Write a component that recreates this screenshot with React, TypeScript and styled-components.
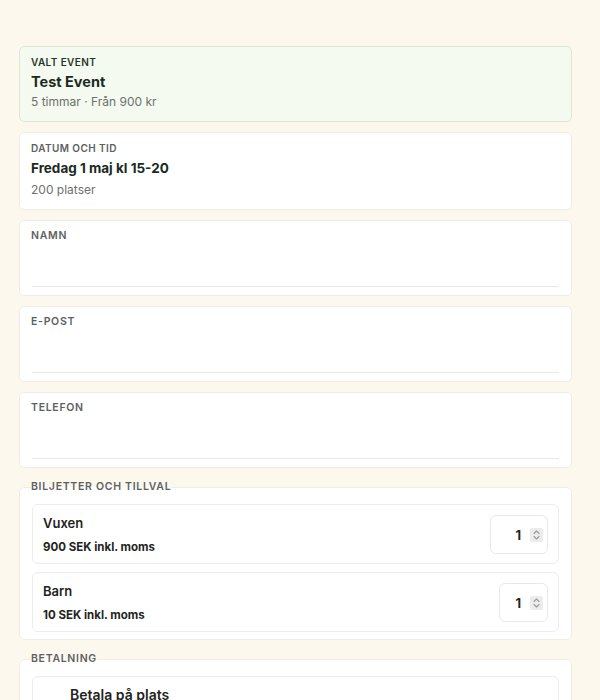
import React from 'react';
import styled, { createGlobalStyle } from 'styled-components';

const GlobalStyle = createGlobalStyle`
  html, body {
    margin: 0;
    padding: 0;
    background: #fdf8ee;
  }
  body {
    font-family: Inter, 'Noto Sans', Arial, sans-serif;
    color: #1d1f1e;
    -webkit-font-smoothing: antialiased;
  }
  * {
    box-sizing: border-box;
  }
`;

export const Page = styled.div`
  width: 553px;
  margin-left: 19px;
  padding: 46px 0 40px;
  display: flex;
  flex-direction: column;
  gap: 10px;
`;

export const Card = styled.div<{ $selected?: boolean }>`
  display: flex;
  flex-direction: column;
  padding: 8px 11px 10px;
  border-radius: 5px;
  border: 1px solid ${(p) => (p.$selected ? '#dfe6d4' : '#f1ede4')};
  background: ${(p) => (p.$selected ? '#f5faf0' : '#ffffff')};
`;

export const SmallLabel = styled.span<{ $dark?: boolean }>`
  font-size: 10px;
  line-height: 14px;
  font-weight: 600;
  letter-spacing: 0.4px;
  text-transform: uppercase;
  color: ${(p) => (p.$dark ? '#26352a' : '#5d615e')};
`;

export const Title = styled.span<{ $size?: number; $weight?: number }>`
  margin-top: 3px;
  font-size: ${(p) => p.$size ?? 14.5}px;
  line-height: 20px;
  font-weight: ${(p) => p.$weight ?? 700};
  color: #1b2a1f;
`;

export const Meta = styled.span<{ $gap?: number }>`
  margin-top: ${(p) => p.$gap ?? 2}px;
  font-size: 12px;
  line-height: 18px;
  color: #6c706c;
`;

export const FieldCard = styled.label`
  display: flex;
  flex-direction: column;
  padding: 8px 12px 8px;
  border-radius: 5px;
  border: 1px solid #f1ede4;
  background: #ffffff;
`;

export const FieldLabel = styled.span`
  margin-left: -1px;
  font-size: 10.5px;
  line-height: 14px;
  font-weight: 600;
  letter-spacing: 0.7px;
  text-transform: uppercase;
  color: #5d615e;
`;

export const TextInput = styled.input`
  height: 44px;
  width: 100%;
  border: none;
  border-bottom: 1px solid #e8e8e6;
  background: transparent;
  font: inherit;
  font-size: 14px;
  outline: none;
  padding: 0;
`;

export const Group = styled.fieldset`
  margin: 0;
  padding: 8px 12px 7px;
  border: 1px solid #f0ede6;
  border-radius: 6px;
  background: #ffffff;
  display: flex;
  flex-direction: column;
  gap: 8px;
`;

export const Legend = styled.legend`
  padding: 0;
  margin-left: -1px;
  font-size: 10.5px;
  line-height: 18px;
  font-weight: 600;
  letter-spacing: 0.7px;
  text-transform: uppercase;
  color: #5d615e;
`;

export const OptionRow = styled.div`
  display: flex;
  align-items: center;
  justify-content: space-between;
  padding: 9px 10px 8px;
  border: 1px solid #ececec;
  border-radius: 6px;
  background: #ffffff;
`;

export const OptionInfo = styled.div`
  display: flex;
  flex-direction: column;
`;

export const OptionName = styled.span`
  font-size: 13px;
  line-height: 18px;
  font-weight: 600;
  color: #1f2421;
`;

export const OptionPrice = styled.span`
  margin-top: 7px;
  font-size: 11.5px;
  line-height: 16px;
  font-weight: 700;
  color: #1f2421;
`;

export const Stepper = styled.div<{ $width: number }>`
  width: ${(p) => p.$width}px;
  height: 39px;
  display: flex;
  align-items: center;
  justify-content: flex-end;
  gap: 9px;
  padding-right: 4px;
  border: 1px solid #e8e8e8;
  border-radius: 6px;
  background: #ffffff;
`;

export const StepValue = styled.span`
  font-size: 13px;
  font-weight: 700;
  color: #1f2421;
`;

export const SpinBox = styled.span`
  width: 13px;
  height: 14px;
  display: flex;
  align-items: center;
  justify-content: center;
  background: #ececec;
  border-radius: 2px;
`;

export const PayRow = styled.label`
  display: flex;
  align-items: center;
  gap: 11px;
  padding: 9px 10px 14px 9px;
  border: 1px solid #ececec;
  border-radius: 6px;
`;

export const Radio = styled.span`
  width: 16px;
  height: 16px;
  border-radius: 50%;
  border: 5px solid #1f2421;
  margin-right: 1px;
  flex-shrink: 0;
`;

export const PayText = styled.div`
  display: flex;
  flex-direction: column;
  gap: 8px;
`;

export const PayTitle = styled.span`
  font-size: 14px;
  line-height: 18px;
  font-weight: 600;
  color: #1f2421;
`;

export const PayNote = styled.span`
  font-size: 12px;
  line-height: 17px;
  color: #6c706c;
`;

const Spin: React.FC = () => (
  <SpinBox>
    <svg width="7" height="10" viewBox="0 0 7 10" fill="none" stroke="#9a9a9a" strokeWidth="1.1" strokeLinecap="round" strokeLinejoin="round">
      <path d="M1 3.5 3.5 1 6 3.5" />
      <path d="M1 6.5 3.5 9 6 6.5" />
    </svg>
  </SpinBox>
);

const tickets = [
  { name: 'Vuxen', price: '900 SEK inkl. moms', qty: 1, width: 58 },
  { name: 'Barn', price: '10 SEK inkl. moms', qty: 1, width: 49 },
];

const App: React.FC = () => {
  return (
    <>
      <GlobalStyle />
      <Page>
        <Card $selected>
          <SmallLabel $dark>Valt event</SmallLabel>
          <Title>Test Event</Title>
          <Meta $gap={1}>5 timmar · Från 900 kr</Meta>
        </Card>

        <Card>
          <SmallLabel>Datum och tid</SmallLabel>
          <Title $size={13.5} $weight={650}>Fredag 1 maj kl 15-20</Title>
          <Meta $gap={3}>200 platser</Meta>
        </Card>

        <FieldCard>
          <FieldLabel>Namn</FieldLabel>
          <TextInput type="text" />
        </FieldCard>

        <FieldCard>
          <FieldLabel>E-post</FieldLabel>
          <TextInput type="email" />
        </FieldCard>

        <FieldCard>
          <FieldLabel>Telefon</FieldLabel>
          <TextInput type="tel" />
        </FieldCard>

        <Group>
          <Legend>Biljetter och tillval</Legend>
          {tickets.map((t) => (
            <OptionRow key={t.name}>
              <OptionInfo>
                <OptionName>{t.name}</OptionName>
                <OptionPrice>{t.price}</OptionPrice>
              </OptionInfo>
              <Stepper $width={t.width}>
                <StepValue>{t.qty}</StepValue>
                <Spin />
              </Stepper>
            </OptionRow>
          ))}
        </Group>

        <Group>
          <Legend>Betalning</Legend>
          <PayRow>
            <Radio />
            <PayText>
              <PayTitle>Betala på plats</PayTitle>
              <PayNote>Du betalar när du kommer till eventet.</PayNote>
              <PayNote>Kort eller Swish accepteras.</PayNote>
            </PayText>
          </PayRow>
        </Group>
      </Page>
    </>
  );
};

export default App;
